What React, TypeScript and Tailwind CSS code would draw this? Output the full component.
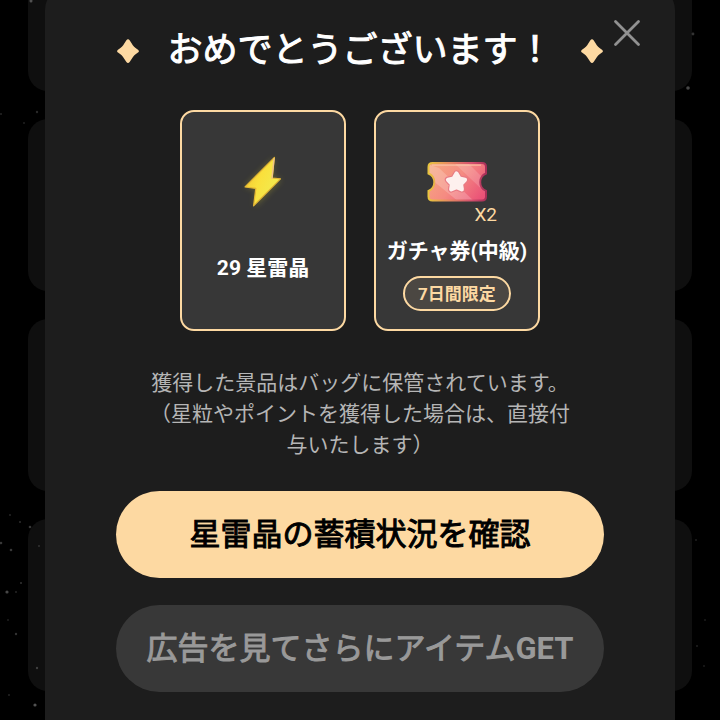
import type { ReactNode } from "react";

function Sparkle() {
  return (
    <svg className="h-[26px] w-[22px] shrink-0" viewBox="0 0 22 26" fill="#fdd9a2" aria-hidden="true">
      <path d="M9.2 2.6Q11 0 12.8 2.6L15.8 7.2Q17 9 18.6 10L21 11.8Q22.8 13.2 21 14.6L18.6 16.2Q17 17.4 15.8 19.2L12.8 23.8Q11 26.4 9.2 23.8L6.2 19.2Q5 17.4 3.4 16.2L1 14.6Q-.8 13.2 1 11.8L3.4 10Q5 9 6.2 7.2Z" />
    </svg>
  );
}

function BoltIcon() {
  return (
    <svg className="size-20" viewBox="0 0 80 80" aria-hidden="true">
      <defs>
        <linearGradient id="bolt" x1="0" y1="0" x2="1" y2="0.6">
          <stop offset="0" stopColor="#eebc31" />
          <stop offset="0.5" stopColor="#fae03c" />
          <stop offset="1" stopColor="#f0ec52" />
        </linearGradient>
        <filter id="boltGlow" x="-50%" y="-50%" width="200%" height="200%">
          <feGaussianBlur stdDeviation="3" />
        </filter>
      </defs>
      <path d="M51 16 48.5 35.5 58.5 37 31.5 65 33.5 47 22 45Z" fill="#b9b02c" opacity="0.4" filter="url(#boltGlow)" />
      <path
        d="M51.4 15.5 49.2 36 57.5 36.8 30.6 63.8 32.8 46.4 22 45Z"
        fill="url(#bolt)"
        stroke="#e3b634"
        strokeWidth="1.2"
        strokeLinejoin="round"
      />
      <path d="M51 16.6 49 36.2" stroke="#eec48a" strokeWidth="1.4" strokeLinecap="round" />
    </svg>
  );
}

function TicketIcon() {
  return (
    <svg className="size-20" viewBox="0 0 80 80" aria-hidden="true">
      <defs>
        <linearGradient id="ticket" x1="0" y1="0.2" x2="1" y2="0.7">
          <stop offset="0" stopColor="#f6a881" />
          <stop offset="0.5" stopColor="#f58b82" />
          <stop offset="1" stopColor="#ea5277" />
        </linearGradient>
        <linearGradient id="ticketEdge" x1="0" y1="0" x2="1" y2="0">
          <stop offset="0" stopColor="#e8c53e" />
          <stop offset="0.35" stopColor="#e88a62" />
          <stop offset="0.75" stopColor="#d4506e" />
          <stop offset="1" stopColor="#a82f58" />
        </linearGradient>
        <clipPath id="ticketShape">
          <path d="M15.5 21H65Q69 21 69 25V31.5A9.5 9.5 0 0 0 69 49V54.5Q69 58.5 65 58.5H15.5Q11.5 58.5 11.5 54.5V49A9.5 9.5 0 0 0 11.5 31.5V25Q11.5 21 15.5 21Z" />
        </clipPath>
      </defs>
      <g clipPath="url(#ticketShape)">
        <path d="M10 20H70V60H10Z" fill="url(#ticket)" />
        <path d="M10 22 22 26 58 60H42L10 34Z" fill="#fff" opacity="0.2" />
        <path d="M36 20H50L72 42V54Z" fill="#fff" opacity="0.16" />
      </g>
      <path
        d="M15.5 21H65Q69 21 69 25V31.5A9.5 9.5 0 0 0 69 49V54.5Q69 58.5 65 58.5H15.5Q11.5 58.5 11.5 54.5V49A9.5 9.5 0 0 0 11.5 31.5V25Q11.5 21 15.5 21Z"
        fill="none"
        stroke="url(#ticketEdge)"
        strokeWidth="2"
      />
      <path d="M15 23.2H64" stroke="#fbd0ad" strokeWidth="1.2" opacity="0.7" />
      <path
        d="M39.5 31.5 42.4 36.6 48 37.7 44 42 44.8 47.4 39.5 45 34.2 47.4 35 42 31 37.7 36.6 36.6Z"
        fill="#fff"
        stroke="#e87a83"
        strokeWidth="6.4"
        strokeLinejoin="round"
      />
      <path
        d="M39.5 31.5 42.4 36.6 48 37.7 44 42 44.8 47.4 39.5 45 34.2 47.4 35 42 31 37.7 36.6 36.6Z"
        fill="#fdf0ee"
        stroke="#fdf0ee"
        strokeWidth="4.2"
        strokeLinejoin="round"
      />
    </svg>
  );
}

const stars: [number, number, number, number][] = [
  [10, 515, 1, 0.15], [20, 522, 1, 0.18], [30, 527, 1.3, 0.22], [1, 543, 1.3, 0.22],
  [11, 550, 1.3, 0.22], [39, 546, 1, 0.15], [7, 592, 1.6, 0.28], [21, 583, 1, 0.2],
  [16, 634, 1.2, 0.2], [37, 668, 1.2, 0.2], [35, 705, 1.6, 0.32], [9, 695, 1, 0.14],
  [8, 620, 1, 0.12], [16, 592, 1, 0.15], [31, 1, 1.5, 0.28], [37, 112, 1.2, 0.16],
  [24, 123, 1, 0.13], [1, 114, 1, 0.15], [693, 34, 1.4, 0.2], [688, 88, 1.8, 0.28],
  [696, 540, 1, 0.12], [705, 620, 1, 0.11], [697, 646, 1, 0.13], [704, 666, 1, 0.11],
];

function StarField() {
  return (
    <svg className="absolute inset-0 size-full" viewBox="0 0 720 720" preserveAspectRatio="xMidYMin slice" aria-hidden="true">
      {stars.map(([x, y, r, o]) => (
        <circle key={`${x}-${y}`} cx={x} cy={y} r={r} fill="#fff" opacity={o} />
      ))}
    </svg>
  );
}

function RewardCard({ children }: { children: ReactNode }) {
  return (
    <li className="flex h-[221px] w-[166px] flex-col items-center rounded-[14px] border-2 border-[#fdd9a2] bg-[#373737] pt-[30px]">
      {children}
    </li>
  );
}

export default function App() {
  return (
    <main className="relative h-screen overflow-hidden bg-black font-['Roboto','Noto_Sans_CJK_JP',sans-serif]" lang="ja">
      <div className="-mt-20 flex flex-col gap-7 px-7" aria-hidden="true">
        <div className="h-[171px] rounded-[20px] bg-[#0f0f0f]" />
        <div className="h-[172px] rounded-[20px] bg-[#0f0f0f]" />
        <div className="h-[172px] rounded-[20px] bg-[#0f0f0f]" />
        <div className="h-[172px] rounded-[20px] bg-[#0f0f0f]" />
      </div>
      <StarField />

      <div className="absolute inset-0 flex px-[45px]">
        <section
          role="dialog"
          aria-labelledby="title"
          className="relative -mt-3.5 min-h-[120vh] w-full rounded-3xl bg-[#1d1d1d] px-[71px] pt-10"
        >
          <button type="button" aria-label="閉じる" className="absolute top-[27px] right-7 flex size-10 items-center justify-center">
            <svg className="size-7" viewBox="0 0 28 28" stroke="#919191" strokeWidth="2.8" strokeLinecap="round" aria-hidden="true">
              <path d="M2.5 2.5 25.5 25.5M25.5 2.5 2.5 25.5" />
            </svg>
          </button>

          <header className="flex items-center justify-between px-px">
            <Sparkle />
            <h1 id="title" className="text-[35px] leading-[50px] font-normal whitespace-nowrap text-white [-webkit-text-stroke:1px_currentColor]">
              おめでとうございます！
            </h1>
            <Sparkle />
          </header>

          <ul className="mt-[34px] flex justify-center gap-7">
            <RewardCard>
              <BoltIcon />
              <p className="mt-8 text-[21px] leading-7 font-bold text-white">29 星雷晶</p>
            </RewardCard>
            <RewardCard>
              <div className="relative">
                <TicketIcon />
                <span className="absolute right-0 bottom-0 text-[19px] leading-[14px] text-[#fdd9a2]">X2</span>
              </div>
              <p className="mt-[15px] text-[21px] leading-7 font-bold whitespace-nowrap text-white">ガチャ券(中級)</p>
              <p className="mt-[11px] flex h-[35px] w-[108px] items-center justify-center rounded-full border-2 border-[#fdd9a2] bg-[#4b4742] text-[17px] leading-6 font-bold text-[#fdd9a2]">
                7日間限定
              </p>
            </RewardCard>
          </ul>

          <p className="mx-auto mt-[37px] max-w-[430px] text-center text-[21px] leading-[31px] text-[#b5b5b5]">
            獲得した景品はバッグに保管されています。（星粒やポイントを獲得した場合は、直接付与いたします）
          </p>

          <div className="mt-[30px] flex flex-col gap-[27px] text-[31px] leading-10">
            <button
              type="button"
              className="h-[87px] rounded-full bg-[#fdd9a2] font-normal whitespace-nowrap text-black [-webkit-text-stroke:1px_currentColor]"
            >
              星雷晶の蓄積状況を確認
            </button>
            <button
              type="button"
              className="h-[87px] rounded-full bg-[#383838] font-normal whitespace-nowrap text-[#999999] [-webkit-text-stroke:1px_currentColor]"
            >
              広告を見てさらにアイテム<span className="font-bold [-webkit-text-stroke:0]">GET</span>
            </button>
          </div>
        </section>
      </div>
    </main>
  );
}
